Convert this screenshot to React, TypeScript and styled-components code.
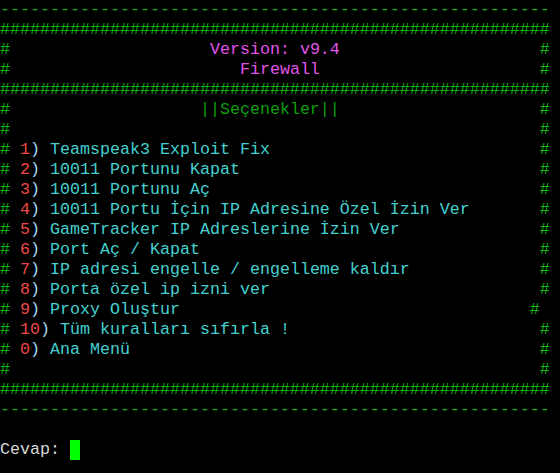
import React from "react";
import styled, { createGlobalStyle } from "styled-components";

const Global = createGlobalStyle`
  html, body { margin: 0; padding: 0; background: #000; }
  body { width: 560px; height: 473px; overflow: hidden; }
`;

const Screen = styled.div`
  width: 560px;
  height: 473px;
  background: #000;
  font-family: "Liberation Mono", "Courier New", monospace;
  font-size: 16.667px;
  line-height: 20px;
  color: #c0c0c0;
  overflow: hidden;
`;

const Line = styled.div`
  white-space: pre;
  height: 20px;
`;

type Tone = "hash" | "title" | "section" | "num" | "text" | "paren" | "prompt";

const toneColor: Record<Tone, string> = {
  hash: "#13b513",
  title: "#e054e8",
  section: "#0d9e0d",
  num: "#f04848",
  text: "#45d0d0",
  paren: "#9fd6f0",
  prompt: "#d8d8d8",
};

const Seg = styled.span<{ $tone: Tone }>`
  color: ${(p) => toneColor[p.$tone]};
`;

const Cursor = styled.span`
  display: inline-block;
  width: 10px;
  height: 20px;
  background: #00ff00;
  vertical-align: top;
`;

const WIDTH = 55;

const fullRow = (ch: string) => ch.repeat(WIDTH);

type Framed = { pad: number; parts: { t: string; tone: Tone }[]; end?: number };

const FramedLine: React.FC<Framed> = ({ pad, parts, end = 54 }) => {
  const used = 1 + pad + parts.reduce((n, p) => n + p.t.length, 0);
  const rest = Math.max(0, end - used);
  return (
    <Line>
      <Seg $tone="hash">#</Seg>
      {" ".repeat(pad)}
      {parts.map((p, i) => (
        <Seg key={i} $tone={p.tone}>
          {p.t}
        </Seg>
      ))}
      {" ".repeat(rest)}
      <Seg $tone="hash">#</Seg>
    </Line>
  );
};

const menu: { n: string; label: string; end?: number }[] = [
  { n: "1", label: "Teamspeak3 Exploit Fix" },
  { n: "2", label: "10011 Portunu Kapat" },
  { n: "3", label: "10011 Portunu Aç" },
  { n: "4", label: "10011 Portu İçin IP Adresine Özel İzin Ver" },
  { n: "5", label: "GameTracker IP Adreslerine İzin Ver" },
  { n: "6", label: "Port Aç / Kapat" },
  { n: "7", label: "IP adresi engelle / engelleme kaldır" },
  { n: "8", label: "Porta özel ip izni ver" },
  { n: "9", label: "Proxy Oluştur", end: 53 },
  { n: "10", label: "Tüm kuralları sıfırla !" },
  { n: "0", label: "Ana Menü" },
];

export default function App() {
  return (
    <>
      <Global />
      <Screen>
        <Line>
          <Seg $tone="hash">{fullRow("-")}</Seg>
        </Line>
        <Line>
          <Seg $tone="hash">{fullRow("#")}</Seg>
        </Line>
        <FramedLine pad={20} parts={[{ t: "Version: v9.4", tone: "title" }]} />
        <FramedLine pad={23} parts={[{ t: "Firewall", tone: "title" }]} />
        <Line>
          <Seg $tone="hash">{fullRow("#")}</Seg>
        </Line>
        <FramedLine pad={19} parts={[{ t: "||Seçenekler||", tone: "section" }]} />
        <FramedLine pad={0} parts={[]} />
        {menu.map((m) => (
          <FramedLine
            key={m.n}
            pad={1}
            end={m.end}
            parts={[
              { t: m.n, tone: "num" },
              { t: ")", tone: "paren" },
              { t: " " + m.label, tone: "text" },
            ]}
          />
        ))}
        <FramedLine pad={0} parts={[]} />
        <Line>
          <Seg $tone="hash">{fullRow("#")}</Seg>
        </Line>
        <Line>
          <Seg $tone="hash">{fullRow("-")}</Seg>
        </Line>
        <Line />
        <Line>
          <Seg $tone="prompt">Cevap: </Seg>
          <Cursor />
        </Line>
      </Screen>
    </>
  );
}
